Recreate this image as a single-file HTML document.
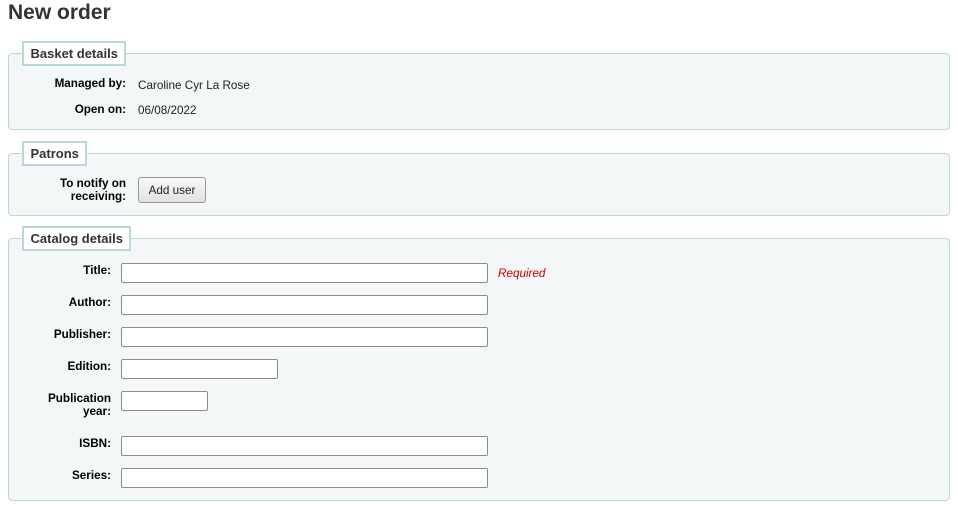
<!DOCTYPE html>
<html><head><style>
body{margin:0;width:958px;height:507px;background:#fff;font-family:"Liberation Sans",sans-serif;position:relative;overflow:hidden;color:#000}
.a{position:absolute}
h1{position:absolute;left:8px;top:0;margin:0;font-size:21px;font-weight:bold;color:#333;line-height:26px}
.fs{position:absolute;left:8px;width:940px;background:#f4f7f7;border:1px solid #b9d8d9;border-radius:4px}
.lg{position:absolute;left:22px;height:21px;background:#fff;border:2px solid #b9d8d9;font-size:13px;font-weight:bold;color:#333;line-height:21px;padding:0 6.5px;box-sizing:content-box}
.lb{position:absolute;text-align:right;font-size:11.7px;font-weight:bold;line-height:13px}
.v{position:absolute;font-size:11.7px;color:#222}
.in{position:absolute;height:18px;background:#fff;border:1px solid #8a8a95;border-radius:2px}
</style></head><body>
<h1>New order</h1>
<div class="fs" style="top:53px;height:75px"></div>
<div class="lg" style="top:41px">Basket details</div>
<div class="lb" style="right:832px;top:77px">Managed by:</div>
<div class="v" style="left:138px;top:79px">Caroline Cyr La Rose</div>
<div class="lb" style="right:832px;top:103px">Open on:</div>
<div class="v" style="left:138px;top:104px">06/08/2022</div>

<div class="fs" style="top:153px;height:61px"></div>
<div class="lg" style="top:141px">Patrons</div>
<div class="lb" style="right:832px;top:177px">To notify on<br>receiving:</div>
<div class="a" style="left:138px;top:177px;width:66px;height:24px;border:1px solid #999;border-radius:3px;background:linear-gradient(#f8f8f8,#e2e2e2);font-size:11.7px;line-height:25px;text-align:center;color:#222">Add user</div>

<div class="fs" style="top:238px;height:261px"></div>
<div class="lg" style="top:226px">Catalog details</div>
<div class="lb" style="right:847px;top:264px">Title:</div>
<div class="in" style="left:121px;top:263px;width:365px"></div>
<div class="a" style="left:498px;top:267px;font-size:11.7px;font-style:italic;color:#c00">Required</div>
<div class="lb" style="right:847px;top:296px">Author:</div>
<div class="in" style="left:121px;top:295px;width:365px"></div>
<div class="lb" style="right:847px;top:328px">Publisher:</div>
<div class="in" style="left:121px;top:327px;width:365px"></div>
<div class="lb" style="right:847px;top:360px">Edition:</div>
<div class="in" style="left:121px;top:359px;width:155px"></div>
<div class="lb" style="right:847px;top:392px">Publication<br>year:</div>
<div class="in" style="left:121px;top:391px;width:85px"></div>
<div class="lb" style="right:847px;top:437px">ISBN:</div>
<div class="in" style="left:121px;top:436px;width:365px"></div>
<div class="lb" style="right:847px;top:469px">Series:</div>
<div class="in" style="left:121px;top:468px;width:365px"></div>
</body></html>
